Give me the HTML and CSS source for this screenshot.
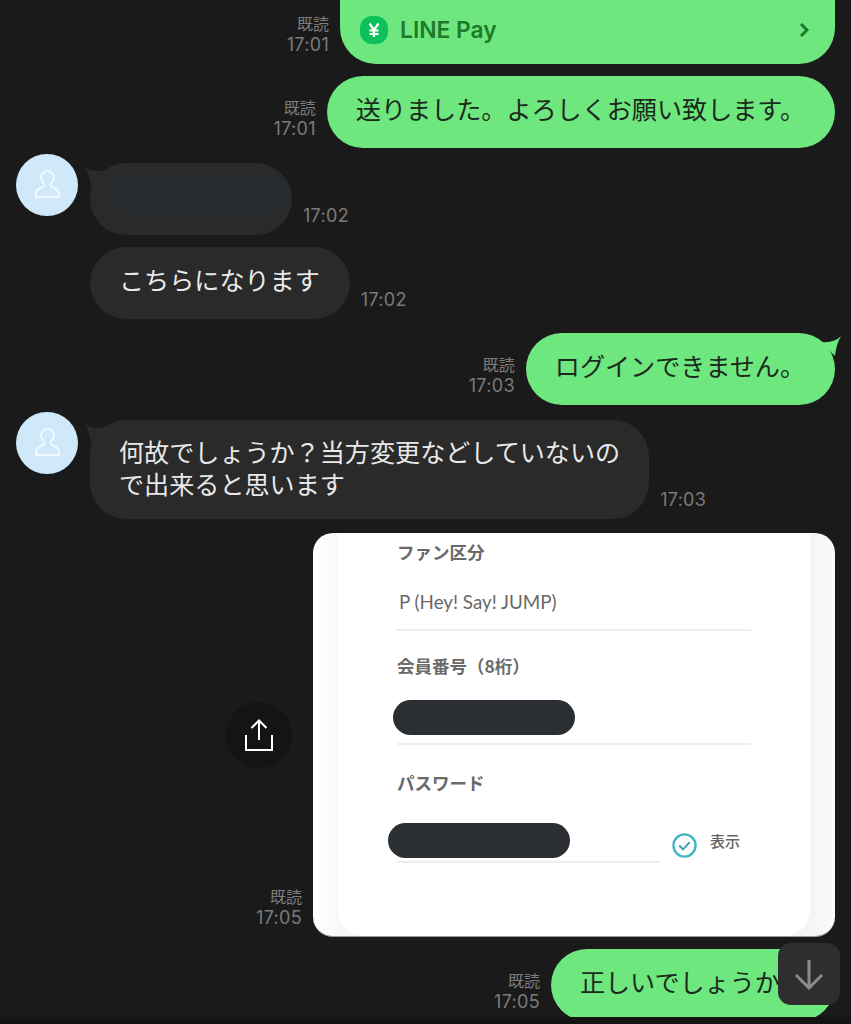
FILE: index.html
```html
<!DOCTYPE html>
<html lang="ja">
<head>
<meta charset="utf-8">
<title>トーク</title>
<link rel="stylesheet" href="styles.css">
</head>
<body>
<main class="chat">
  <div class="row row-out row-first">
    <div class="meta"><span>既読</span><span>17:01</span></div>
    <div class="bubble out pay">
      <svg class="pay-icon" viewBox="0 0 28 28" aria-hidden="true">
        <rect width="28" height="28" rx="12" fill="#0cc159"/>
        <path d="M9.5 7.5 14 14l4.5-6.5M14 14v7M9.5 14.5h9M9.5 18h9" fill="none" stroke="#fff" stroke-width="2.2"/>
      </svg>
      <span class="pay-name">LINE Pay</span>
      <svg class="pay-chevron" viewBox="0 0 10 16" aria-hidden="true">
        <path d="M2 2l6 6-6 6" fill="none" stroke="#1e7a2b" stroke-width="3"/>
      </svg>
    </div>
  </div>

  <div class="row row-out gap-12">
    <div class="meta"><span>既読</span><span>17:01</span></div>
    <div class="bubble out">送りました。よろしくお願い致します。</div>
  </div>

  <div class="row row-in gap-6">
    <div class="avatar">
      <svg viewBox="0 0 62 62" aria-hidden="true">
        <path d="M20 43v-3q0-4 5-6l3-1.500q1-1 0-3-3-3-3-6a6.500 6.500 0 0 1 13 0q0 3-3 6-1 2 0 3l3 1.500q5 2 5 6v3z" fill="none" stroke="#f2f9fe" stroke-width="2"/>
      </svg>
    </div>
    <div class="bubble in tail-in masked"><span class="mask"></span></div>
    <div class="time">17:02</div>
  </div>

  <div class="row row-in row-indent gap-12">
    <div class="bubble in">こちらになります</div>
    <div class="time">17:02</div>
  </div>

  <div class="row row-out gap-14">
    <div class="meta"><span>既読</span><span>17:03</span></div>
    <div class="bubble out tail-out">ログインできません。</div>
  </div>

  <div class="row row-in gap-7">
    <div class="avatar">
      <svg viewBox="0 0 62 62" aria-hidden="true">
        <path d="M20 43v-3q0-4 5-6l3-1.500q1-1 0-3-3-3-3-6a6.500 6.500 0 0 1 13 0q0 3-3 6-1 2 0 3l3 1.500q5 2 5 6v3z" fill="none" stroke="#f2f9fe" stroke-width="2"/>
      </svg>
    </div>
    <div class="bubble in tail-in two-line">何故でしょうか？当方変更などしていないの<br>で出来ると思います</div>
    <div class="time">17:03</div>
  </div>

  <div class="row row-out gap-14">
    <div class="side">
      <button class="share" type="button" aria-label="共有">
        <svg viewBox="0 0 32 32" aria-hidden="true">
          <path d="M16 21V1.500M8.500 9 16 1.500 23.500 9M3 16v15h26V16" fill="none" stroke="#fff" stroke-width="2"/>
        </svg>
      </button>
      <div class="meta meta-shot"><span>既読</span><span>17:05</span></div>
    </div>
    <figure class="shot">
      <div class="shot-card">
        <div class="shot-label">ファン区分</div>
        <div class="shot-value">P (Hey! Say! JUMP)</div>
        <div class="shot-label label-member">会員番号（8桁）</div>
        <div class="shot-field"><span class="redact"></span></div>
        <div class="shot-label label-pass">パスワード</div>
        <div class="pass-row">
          <div class="pass-field"><span class="redact redact-pass"></span></div>
          <svg class="check" viewBox="0 0 26 26" aria-hidden="true">
            <circle cx="13" cy="13" r="11.500" fill="none" stroke="#3fb4c2" stroke-width="2.400"/>
            <path d="M7.500 13l4 4 7-7.500" fill="none" stroke="#3fa0ae" stroke-width="2"/>
          </svg>
          <span class="show">表示</span>
        </div>
      </div>
    </figure>
  </div>

  <div class="row row-out gap-12">
    <div class="meta"><span>既読</span><span>17:05</span></div>
    <div class="bubble out">正しいでしょうか？</div>
  </div>

  <button class="scroll-down" type="button" aria-label="下へ">
    <svg viewBox="0 0 32 32" aria-hidden="true">
      <path d="M16 2v28M3 17l13 13 13-13" fill="none" stroke="#8b8b8b" stroke-width="3"/>
    </svg>
  </button>
</main>
</body>
</html>
```

FILE: styles.css
```css
* { box-sizing: border-box; }

html, body {
  margin: 0;
  height: 1024px;
  overflow: hidden;
  background: #141414;
}

body {
  font-family: "Noto Sans CJK JP", "Liberation Sans", sans-serif;
}

.chat {
  position: relative;
  display: flex;
  flex-direction: column;
  height: 1017px;
  padding: 0 16px;
  background: #1a1a1a;
  overflow: hidden;
}

.row { display: flex; flex-shrink: 0; }
.row-out { justify-content: flex-end; align-items: flex-end; gap: 11px; }
.row-in { align-items: flex-end; }
.row-indent { padding-left: 74px; }
.row-first { margin-top: 0; }

.gap-6 { margin-top: 6px; }
.gap-7 { margin-top: 7px; }
.gap-12 { margin-top: 12px; }
.gap-14 { margin-top: 14px; }

.bubble {
  position: relative;
  display: flex;
  align-items: center;
  min-height: 72px;
  padding: 0 30px 8px 29px;
  border-radius: 36px;
  font-size: 25.100px;
  line-height: 32.500px;
}

.out { background: #6ee77f; color: #1b2a1d; }
.in { background: #2a2a2a; color: #e9e9e9; }

.two-line { display: block; padding: 15px 29px 20px; line-height: 32px; }

.tail-in::before,
.tail-out::before {
  content: "";
  position: absolute;
  width: 24px;
  height: 20px;
}

.tail-in::before {
  left: -5px;
  top: 4px;
  clip-path: path("M0 0Q8 6 20 3L6 20Q5 9 0 0Z");
  background: #2a2a2a;
}

.tail-out::before {
  right: -6px;
  top: 3px;
  clip-path: path("M24 0Q18 7 4 6L18 20Q19 9 24 0Z");
  background: #6ee77f;
}

.pay {
  width: 495px;
  height: 64px;
  min-height: 0;
  padding: 0 26px 4px 20px;
  border-radius: 0 0 36px 36px;
}

.pay-icon { width: 28px; height: 28px; margin-right: 12px; }

.pay-name {
  flex: 1;
  font-family: "Inter", "Liberation Sans", sans-serif;
  font-size: 22.800px;
  font-weight: 600;
  color: #1e7a2b;
}

.pay-chevron { width: 10px; height: 16px; }

.meta {
  display: flex;
  flex-direction: column;
  align-items: flex-end;
  margin-bottom: 8px;
  font-size: 16px;
  line-height: 22px;
  color: #7d7d7d;
}

.meta span:last-child,
.time {
  font-family: "Inter", "Liberation Sans", sans-serif;
  font-size: 18px;
  letter-spacing: 0.300px;
  color: #7a7a7a;
}

.time {
  margin: 0 0 8px 11px;
  line-height: 22px;
}

.avatar {
  flex: none;
  align-self: flex-start;
  width: 62px;
  height: 62px;
  margin-right: 12px;
  border-radius: 50%;
  background: #cfe9fb;
}

.avatar svg { display: block; width: 62px; height: 62px; }

.row-in .avatar + .bubble { margin-top: 8px; }
.gap-6 .avatar + .bubble { margin-top: 9px; }

.masked { width: 202px; }

.mask {
  flex: none;
  width: 183px;
  height: 36px;
  margin: 0 0 2px -12px;
  border-radius: 18px;
  background: #262c30;
}

.side {
  display: grid;
  align-self: stretch;
  justify-items: end;
}

.side > * { grid-area: 1 / 1; }

.share {
  align-self: center;
  width: 66px;
  height: 66px;
  margin-right: 10px;
  padding: 0;
  border: 0;
  border-radius: 50%;
  background: #141414;
  display: flex;
  align-items: center;
  justify-content: center;
}

.share svg { width: 32px; height: 32px; }

.meta-shot { align-self: end; margin-bottom: 8px; }

.shot {
  width: 522px;
  height: 404px;
  margin: 0;
  padding: 0 25px;
  border-radius: 20px;
  background: linear-gradient(to right, #fff 0, #f8f8f8 25px, #f4f4f4 497px, #fbfbfb 100%);
  overflow: hidden;
  border-bottom: 1px solid #9b9b9b;
}

.shot-card {
  height: 100%;
  padding: 7px 59px 0;
  border-radius: 0 0 26px 26px;
  background: #fff;
}

.shot-label {
  font-size: 17.500px;
  font-weight: 700;
  line-height: 24px;
  color: #6a6a6a;
}

.shot-value {
  margin-top: 26px;
  height: 41px;
  padding-left: 2px;
  border-bottom: 2px solid #eeeeee;
  font-family: "Lato", "Liberation Sans", sans-serif;
  font-size: 18.800px;
  line-height: 24px;
  color: #696969;
}

.label-member { margin-top: 23px; }

.shot-field {
  height: 67px;
  padding-top: 22px;
  border-bottom: 2px solid #eeeeee;
}

.redact {
  display: block;
  width: 182px;
  height: 35px;
  margin-left: -4px;
  border-radius: 18px;
  background: #2b2f33;
}

.label-pass { margin-top: 26px; }

.pass-row {
  display: flex;
  align-items: flex-start;
  margin-top: 28px;
}

.pass-field {
  flex: none;
  width: 263px;
  height: 40px;
  border-bottom: 2px solid #eeeeee;
}

.redact-pass { margin-left: -9px; }

.check {
  flex: none;
  width: 25px;
  height: 25px;
  margin: 10px 0 0 12px;
}

.show {
  margin: 6px 0 0 13px;
  font-size: 15px;
  font-weight: 500;
  line-height: 24px;
  color: #666;
  white-space: nowrap;
}

.scroll-down {
  position: absolute;
  left: 778px;
  top: 943px;
  width: 62px;
  height: 62px;
  padding: 0;
  border: 0;
  border-radius: 13px;
  background: #2e2e2e;
  display: flex;
  align-items: center;
  justify-content: center;
}

.scroll-down svg { width: 32px; height: 32px; }
```
